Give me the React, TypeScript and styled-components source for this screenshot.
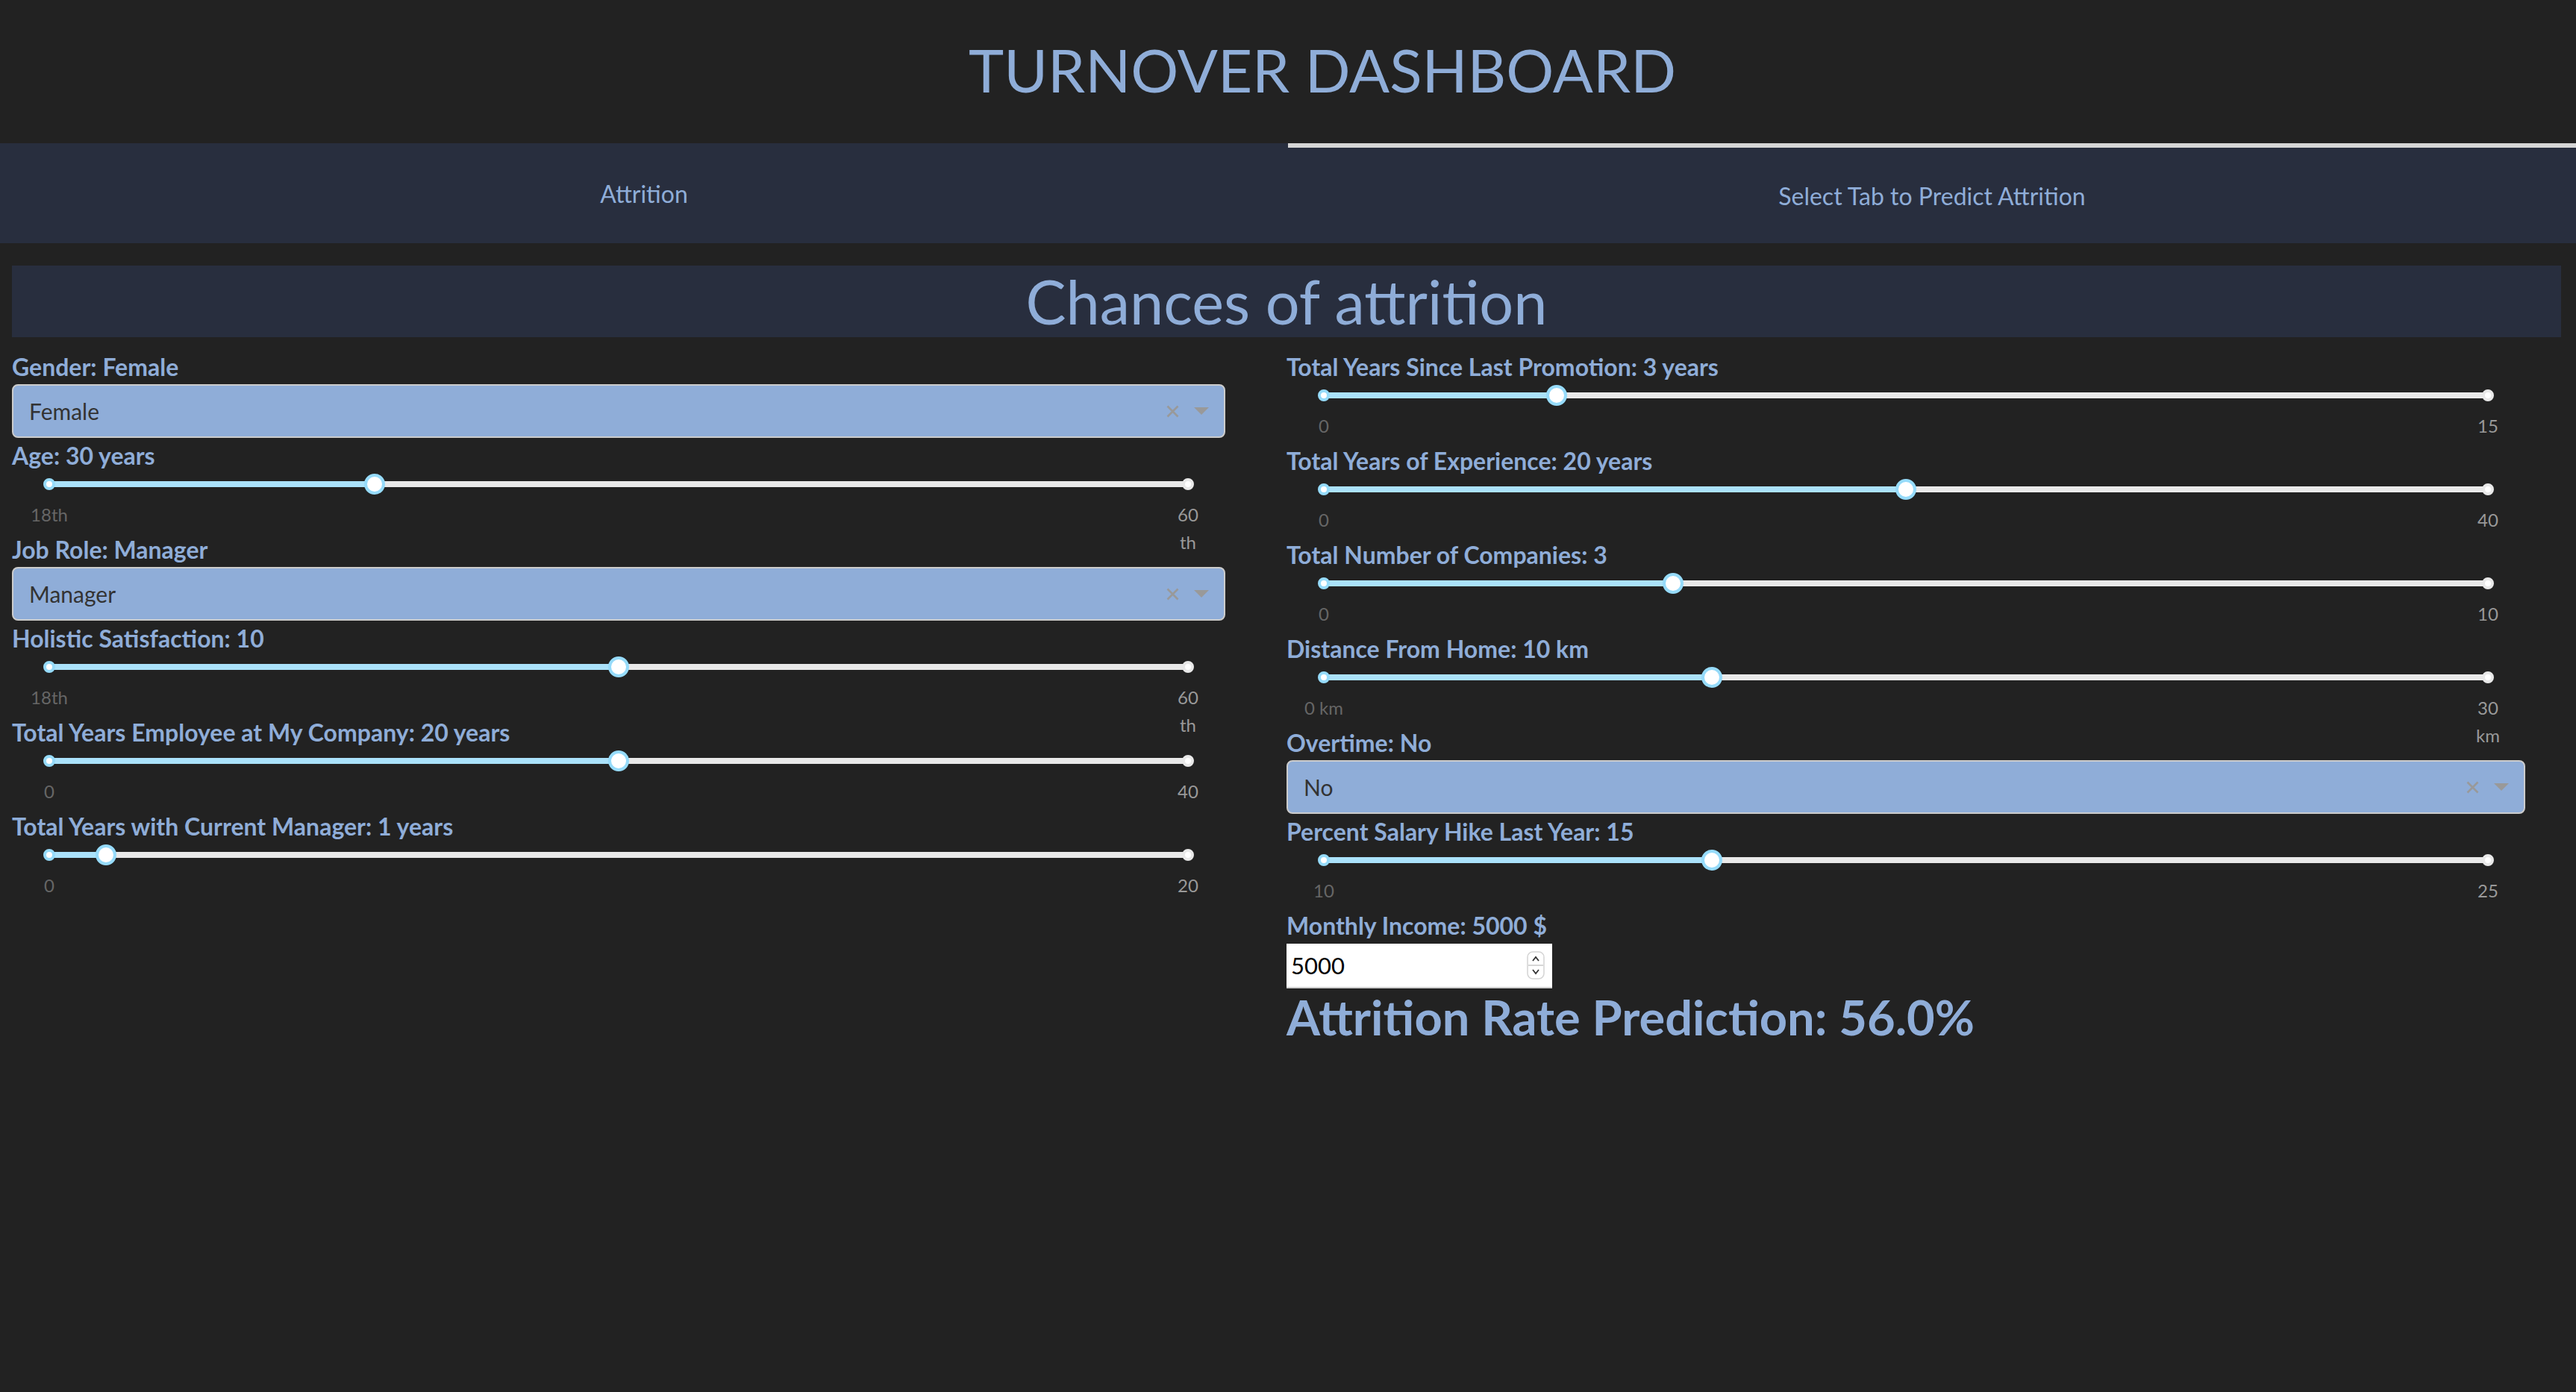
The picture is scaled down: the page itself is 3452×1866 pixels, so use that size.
import React from "react";
import styled, { createGlobalStyle } from "styled-components";

const Global = createGlobalStyle`
  html, body { margin: 0; padding: 0; background: #222222; }
  body { font-family: Lato, "Open Sans", sans-serif; }
  * { box-sizing: border-box; }
`;

const BLUE = "#8fadd8";
const PANEL = "#282e3e";

const Page = styled.div`
  min-height: 1866px;
  background: #222222;
`;

const TitleBar = styled.header`
  height: 192px;
  display: flex;
  align-items: center;
  justify-content: center;
  padding: 0 0 6px 92px;
`;

const Title = styled.h1`
  margin: 0;
  font-family: Lato, sans-serif;
  font-weight: 400;
  font-size: 80px;
  line-height: 1.2;
  color: ${BLUE};
`;

const Tabs = styled.nav`
  display: grid;
  grid-template-columns: 1fr 1fr;
  height: 134px;
  background: ${PANEL};
`;

const Tab = styled.div<{ $selected?: boolean }>`
  display: flex;
  align-items: center;
  justify-content: center;
  border-top: ${(p) => (p.$selected ? "6px solid #d6d6d6" : "0")};
  font-family: Lato, sans-serif;
  font-size: 32px;
  color: ${BLUE};
`;

const Content = styled.main`
  padding: 30px 20px 0 16px;
`;

const SectionHeader = styled.h2`
  margin: 0;
  height: 96px;
  background: ${PANEL};
  display: flex;
  align-items: center;
  justify-content: center;
  font-family: Lato, sans-serif;
  font-weight: 400;
  font-size: 81px;
  color: ${BLUE};
  padding-bottom: 2px;
`;

const Columns = styled.div`
  display: grid;
  grid-template-columns: 1626px 1660px;
  column-gap: 82px;
  margin-top: 22px;
`;

const Column = styled.section`
  display: flex;
  flex-direction: column;
`;

const Label = styled.div`
  font-family: Lato, sans-serif;
  font-weight: 700;
  font-size: 32px;
  line-height: 35px;
  color: ${BLUE};
`;

/* ---------- Dropdown ---------- */
const Select = styled.div`
  height: 72px;
  margin: 6px 0;
  background: ${BLUE};
  border: 2px solid #cccccc;
  border-radius: 8px;
  display: flex;
  align-items: center;
  gap: 20px;
  padding: 0 20px 0 21px;
`;

const SelectValue = styled.span`
  flex: 1;
  font-family: Lato, sans-serif;
  font-size: 30px;
  color: #333333;
`;

const ClearIcon = () => (
  <svg width="17" height="17" viewBox="0 0 17 17">
    <path d="M1.5 1.5 L15.5 15.5 M15.5 1.5 L1.5 15.5" stroke="#999" strokeWidth="2.6" fill="none" />
  </svg>
);

const ArrowIcon = () => (
  <svg width="20" height="10" viewBox="0 0 20 10">
    <path d="M0 0 L20 0 L10 10 Z" fill="#999" />
  </svg>
);

const Dropdown = ({ value }: { value: string }) => (
  <Select>
    <SelectValue>{value}</SelectValue>
    <ClearIcon />
    <ArrowIcon />
  </Select>
);

/* ---------- Slider ---------- */
const SliderBox = styled.div`
  height: 91px;
  padding: 17px 50px 0 50px;
`;

const Rail = styled.div`
  position: relative;
  height: 8px;
  border-radius: 4px;
  background: #e9e9e9;
`;

const Fill = styled.div`
  position: absolute;
  left: 0;
  top: 0;
  height: 8px;
  border-radius: 4px;
  background: #abe2fb;
`;

const Dot = styled.span<{ $active?: boolean; $end?: boolean }>`
  position: absolute;
  top: -4px;
  left: ${(p) => (p.$end ? "100%" : "0")};
  width: 16px;
  height: 16px;
  margin-left: -8px;
  border-radius: 50%;
  background: #ffffff;
  border: 4px solid ${(p) => (p.$active ? "#96dbfa" : "#e9e9e9")};
`;

const Handle = styled.span`
  position: absolute;
  top: -10px;
  width: 28px;
  height: 28px;
  margin-left: -14px;
  border-radius: 50%;
  background: #ffffff;
  border: 4px solid #96dbfa;
`;

const Mark = styled.span<{ $active?: boolean; $end?: boolean }>`
  position: absolute;
  top: 26px;
  left: ${(p) => (p.$end ? "100%" : "0")};
  transform: translateX(-50%);
  white-space: nowrap;
  text-align: center;
  font-family: Lato, sans-serif;
  font-size: 24px;
  line-height: 37px;
  color: ${(p) => (p.$active ? "#666666" : "#999999")};
`;

type SliderProps = { pct: number; min: string[]; max: string[] };

const Slider = ({ pct, min, max }: SliderProps) => (
  <SliderBox>
    <Rail>
      <Fill style={{ width: `${pct}%` }} />
      <Dot $active />
      <Dot $end />
      <Handle style={{ left: `${pct}%` }} />
      <Mark $active>{min.join(" ")}</Mark>
      <Mark $end>
        {max.map((l, i) => (
          <React.Fragment key={i}>
            {i > 0 && <br />}
            {l}
          </React.Fragment>
        ))}
      </Mark>
    </Rail>
  </SliderBox>
);

/* ---------- Number input ---------- */
const InputBox = styled.div`
  margin-top: 7px;
  width: 356px;
  height: 60px;
  background: #ffffff;
  border-bottom: 2px solid #cfcfcf;
  display: flex;
  align-items: center;
  padding: 0 10px 0 6px;
`;

const NumberField = styled.input`
  flex: 1;
  min-width: 0;
  border: 0;
  outline: none;
  background: transparent;
  font-family: Lato, sans-serif;
  font-size: 31px;
  color: #000000;
  padding: 0;
`;

const Spinner = () => (
  <svg width="24" height="38" viewBox="0 0 24 38">
    <rect x="1" y="1" width="22" height="36" rx="7" fill="#fff" stroke="#d4d4d4" strokeWidth="1.5" />
    <line x1="2" y1="19" x2="22" y2="19" stroke="#c8c8c8" strokeWidth="1.5" />
    <path d="M8 13 L12 8 L16 13" stroke="#333" strokeWidth="1.8" fill="none" />
    <path d="M8 25 L12 30 L16 25" stroke="#333" strokeWidth="1.8" fill="none" />
  </svg>
);

const Prediction = styled.div`
  font-family: Lato, sans-serif;
  font-weight: 700;
  font-size: 65px;
  line-height: 77px;
  color: ${BLUE};
`;

export default function App() {
  return (
    <Page>
      <Global />
      <TitleBar>
        <Title>TURNOVER DASHBOARD</Title>
      </TitleBar>
      <Tabs>
        <Tab>Attrition</Tab>
        <Tab $selected>Select Tab to Predict Attrition</Tab>
      </Tabs>
      <Content>
        <SectionHeader>Chances of attrition</SectionHeader>
        <Columns>
          <Column>
            <Label>Gender: Female</Label>
            <Dropdown value="Female" />
            <Label>Age: 30 years</Label>
            <Slider pct={(12 / 42) * 100} min={["18th"]} max={["60", "th"]} />
            <Label>Job Role: Manager</Label>
            <Dropdown value="Manager" />
            <Label>Holistic Satisfaction: 10</Label>
            <Slider pct={50} min={["18th"]} max={["60", "th"]} />
            <Label>Total Years Employee at My Company: 20 years</Label>
            <Slider pct={50} min={["0"]} max={["40"]} />
            <Label>Total Years with Current Manager: 1 years</Label>
            <Slider pct={5} min={["0"]} max={["20"]} />
          </Column>
          <Column>
            <Label>Total Years Since Last Promotion: 3 years</Label>
            <Slider pct={20} min={["0"]} max={["15"]} />
            <Label>Total Years of Experience: 20 years</Label>
            <Slider pct={50} min={["0"]} max={["40"]} />
            <Label>Total Number of Companies: 3</Label>
            <Slider pct={30} min={["0"]} max={["10"]} />
            <Label>Distance From Home: 10 km</Label>
            <Slider pct={(10 / 30) * 100} min={["0", "km"]} max={["30", "km"]} />
            <Label>Overtime: No</Label>
            <Dropdown value="No" />
            <Label>Percent Salary Hike Last Year: 15</Label>
            <Slider pct={(5 / 15) * 100} min={["10"]} max={["25"]} />
            <Label>Monthly Income: 5000 $</Label>
            <InputBox>
              <NumberField type="text" defaultValue="5000" />
              <Spinner />
            </InputBox>
            <Prediction>Attrition Rate Prediction: 56.0%</Prediction>
          </Column>
        </Columns>
      </Content>
    </Page>
  );
}
